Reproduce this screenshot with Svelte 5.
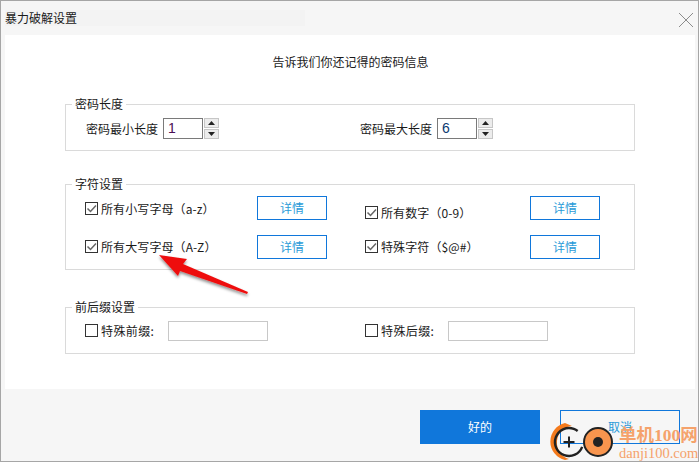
<script>
  const spinUp = 'M7.5 3 L11 7 L4 7 Z';
  const spinDown = 'M4 3 L11 3 L7.5 7 Z';
</script>

<div class="window">
  <header class="titlebar">
    <span class="title">暴力破解设置</span>
    <svg class="close" width="16" height="16" viewBox="0 0 16 16"><path d="M1 1 L15 15 M15 1 L1 15" stroke="#8c8c8c" stroke-width="1" fill="none"/></svg>
  </header>

  <main class="panel">
    <p class="intro">告诉我们你还记得的密码信息</p>

    <fieldset class="group length">
      <legend>密码长度</legend>
      <div class="field min">
        <span>密码最小长度</span>
        <span class="spin-input">1</span>
        <span class="spin">
          <span class="spin-btn"><svg width="15" height="10" viewBox="0 0 15 10"><path d={spinUp} fill="#222"/></svg></span>
          <span class="spin-btn"><svg width="15" height="10" viewBox="0 0 15 10"><path d={spinDown} fill="#222"/></svg></span>
        </span>
      </div>
      <div class="field max">
        <span>密码最大长度</span>
        <span class="spin-input blue">6</span>
        <span class="spin">
          <span class="spin-btn"><svg width="15" height="10" viewBox="0 0 15 10"><path d={spinUp} fill="#222"/></svg></span>
          <span class="spin-btn"><svg width="15" height="10" viewBox="0 0 15 10"><path d={spinDown} fill="#222"/></svg></span>
        </span>
      </div>
    </fieldset>

    <fieldset class="group chars">
      <legend>字符设置</legend>
      <div class="chars-grid">
        <div class="opt left">
          <label class="check up"><span class="box"><svg width="11" height="11" viewBox="0 0 11 11"><path d="M1.5 5.5 L4.5 8.5 L10 2.5" stroke="#666" stroke-width="1.5" fill="none"/></svg></span>所有小写字母（a-z）</label>
          <button class="detail">详情</button>
        </div>
        <div class="opt right">
          <label class="check"><span class="box"><svg width="11" height="11" viewBox="0 0 11 11"><path d="M1.5 5.5 L4.5 8.5 L10 2.5" stroke="#666" stroke-width="1.5" fill="none"/></svg></span>所有数字（0-9）</label>
          <button class="detail">详情</button>
        </div>
        <div class="opt left">
          <label class="check"><span class="box"><svg width="11" height="11" viewBox="0 0 11 11"><path d="M1.5 5.5 L4.5 8.5 L10 2.5" stroke="#666" stroke-width="1.5" fill="none"/></svg></span>所有大写字母（A-Z）</label>
          <button class="detail">详情</button>
        </div>
        <div class="opt right">
          <label class="check"><span class="box"><svg width="11" height="11" viewBox="0 0 11 11"><path d="M1.5 5.5 L4.5 8.5 L10 2.5" stroke="#666" stroke-width="1.5" fill="none"/></svg></span>特殊字符（$@#）</label>
          <button class="detail">详情</button>
        </div>
      </div>
    </fieldset>

    <fieldset class="group affix">
      <legend>前后缀设置</legend>
      <div class="affix-item first">
        <label class="check wide"><span class="box"></span>特殊前缀:</label>
        <span class="text-input"></span>
      </div>
      <div class="affix-item second">
        <label class="check wide"><span class="box"></span>特殊后缀:</label>
        <span class="text-input"></span>
      </div>
    </fieldset>
  </main>

  <footer class="footer">
    <button class="ok">好的</button>
    <button class="cancel">取消</button>
  </footer>

  <svg class="arrow" width="110" height="60" viewBox="0 0 110 60">
    <defs><filter id="sh" x="-20%" y="-30%" width="140%" height="170%"><feDropShadow dx="0" dy="2" stdDeviation="1.6" flood-color="#000" flood-opacity="0.45"/></filter></defs>
    <path d="M9 10 L37 14 L33 19 L98 47 L97 49 L30 26 L28 31 Z" fill="#ee1111" filter="url(#sh)"/>
  </svg>

  <div class="mark">
    <svg class="mark-logo" width="76" height="44" viewBox="0 0 76 44">
      <path d="M17 4 A19 19 0 0 0 17 41 L21 40 A17 17 0 0 1 9 22 A16 16 0 0 1 24 7 Z" fill="#f47a1c"/>
      <circle cx="21" cy="23" r="14" fill="none" stroke="#222" stroke-width="2.4" stroke-dasharray="70 18" transform="rotate(20 21 23)"/>
      <path d="M15.5 23 H26.5 M21 17.5 V28.5" stroke="#222" stroke-width="2"/>
      <circle cx="50" cy="23" r="14" fill="#f8954e" stroke="#222" stroke-width="2"/>
      <circle cx="50" cy="23" r="5" fill="#222"/>
    </svg>
    <div class="mark-text">
      <span class="mark-cn">单机100网</span>
      <span class="mark-en">danji100.com</span>
    </div>
  </div>
</div>

<style>
  :global(body) { margin: 0; background: #fff; }
  .window {
    position: relative;
    box-sizing: border-box;
    width: 699px;
    height: 462px;
    border: 1px solid #a6a6a6;
    background: #f6f6f6;
    display: flex;
    flex-direction: column;
    overflow: hidden;
    font: 12px/16px "Noto Sans CJK SC", "Liberation Sans", sans-serif;
    color: #1a1a1a;
  }
  .titlebar {
    height: 34px;
    flex: none;
    display: flex;
    align-items: center;
    justify-content: space-between;
    padding: 2px 4px 0 4px;
    box-sizing: border-box;
  }
  .title { width: 300px; margin-bottom: 3px; background: #f3f3f3; }
  .close { margin-top: 1px; }
  .panel {
    height: 354px;
    flex: none;
    margin: 0 3px 0 4px;
    background: #fff;
    padding-top: 1px;
    box-sizing: border-box;
  }
  .intro { margin: 18px 0 0; height: 16px; text-align: center; padding-left: 1px; }
  .group {
    margin: 0 0 0 60px;
    width: 570px;
    box-sizing: border-box;
    border: 1px solid #dadada;
    padding: 0;
    min-inline-size: 0;
    position: relative;
  }
  .group legend { margin-left: 6px; padding: 0 3px; line-height: 16px; font-size: 12px; }
  .length { margin-top: 26px; height: 55px; display: flex; padding-top: 6px; }
  .field { display: flex; align-items: center; height: 21px; }
  .field.min { margin-left: 20px; width: 274px; }
  .spin-input {
    box-sizing: border-box;
    width: 40px;
    height: 21px;
    margin-left: 5px;
    border: 1px solid #7a7a7a;
    padding-left: 4px;
    font: 14px/19px "Liberation Sans", sans-serif;
    color: #4b0f55;
  }
  .spin-input.blue { color: #0b3a70; }
  .spin { display: flex; flex-direction: column; gap: 1px; margin-left: 1px; }
  .spin-btn {
    display: block;
    width: 15px;
    height: 10px;
    background: #ececec;
    box-shadow: inset 0 0 0 1px #c6c6c6;
  }
  .spin-btn svg { display: block; }
  .chars { margin-top: 25px; height: 94px; }
  .chars-grid { display: grid; grid-template-columns: 280px 240px; grid-template-rows: 39px 23px; padding: 4px 0 0 19px; }
  .opt { display: flex; align-items: flex-start; justify-content: space-between; }
  .opt.left { width: 242px; }
  .opt.right { width: 235px; }
  .check { display: flex; align-items: center; gap: 3px; height: 23px; letter-spacing: 0.1px; }
  .check.up { margin-top: 1px; }
  .opt.right .check { margin-top: 5px; }
  .opt.right:nth-child(4) .check { margin-top: 0; }
  .box {
    width: 11px;
    height: 11px;
    border: 1px solid #333;
    display: block;
    flex: none;
    background: #fff;
  }
  .box svg { display: block; }
  .detail {
    width: 70px;
    height: 24px;
    box-sizing: border-box;
    border: 1px solid #1077db;
    background: #fff;
    color: #2a9bd8;
    padding: 0;
    font: 12px/16px "Noto Sans CJK SC", sans-serif;
  }
  .affix { margin-top: 29px; height: 55px; display: flex; padding-top: 5px; }
  .affix-item { display: flex; align-items: center; height: 21px; }
  .affix-item.first { margin-left: 19px; width: 280px; }
  .check.wide { width: 83px; height: 21px; letter-spacing: 0.4px; }
  .text-input {
    box-sizing: border-box;
    width: 100px;
    height: 20px;
    border: 1px solid #c8c8c8;
    background: #fff;
  }
  .footer {
    display: flex;
    gap: 20px;
    padding: 21px 0 0 419px;
  }
  .ok, .cancel {
    width: 120px;
    height: 34px;
    box-sizing: border-box;
    padding: 0;
    font: 12px/16px "Noto Sans CJK SC", sans-serif;
  }
  .ok { background: #1077db; border: none; color: #fff; }
  .cancel { background: #f6f6f6; border: 1px solid #1077db; color: #2a9bd8; }
  .arrow { position: absolute; left: 149px; top: 244px; }
  .mark {
    position: absolute;
    left: 547px;
    top: 418px;
    display: flex;
  }
  .mark-logo { display: block; margin-right: -5px; }
  .mark-text { display: flex; flex-direction: column; margin-top: 6px; white-space: nowrap; color: #f5a26b; }
  .mark-cn { font: 700 17.5px/20px "Liberation Serif", "Noto Sans CJK SC", serif; }
  .mark-en { font: 400 14.5px/16px "Liberation Serif", serif; }
</style>
